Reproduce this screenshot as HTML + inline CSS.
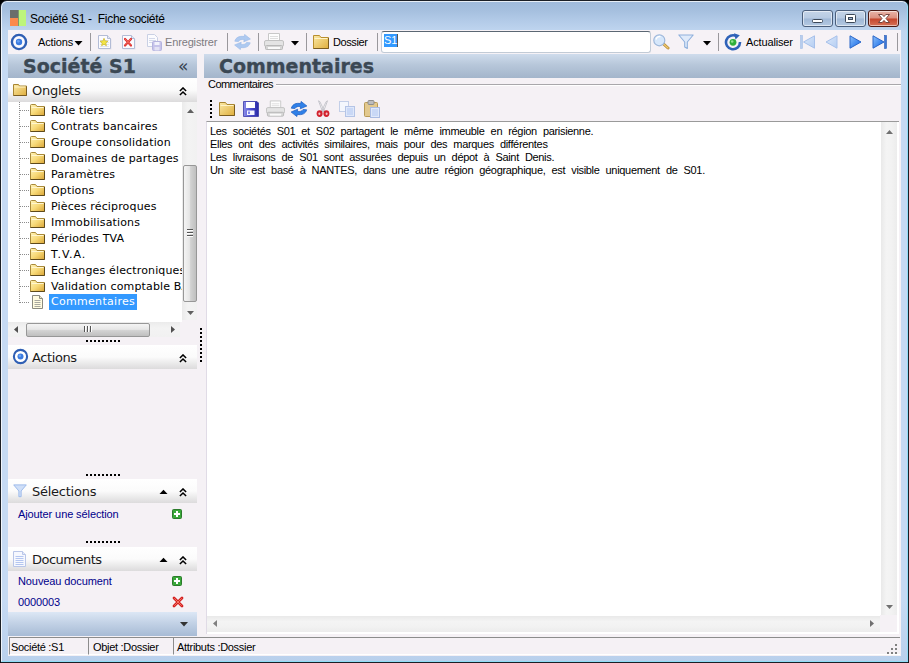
<!DOCTYPE html>
<html lang="fr">
<head>
<meta charset="utf-8">
<title>Société S1 - Fiche société</title>
<style>
html,body{margin:0;padding:0;}
body{width:909px;height:663px;overflow:hidden;background:#000;position:relative;font-family:"Liberation Sans",sans-serif;font-size:12px;color:#000;}
.abs{position:absolute;}
#win{position:absolute;left:0;top:0;width:907px;height:661px;border:1px solid #1b1f26;border-radius:7px 7px 1px 1px;background:linear-gradient(#9fbadb 0px,#a6c0df 10px,#b3cbe8 20px,#bfd5ef 30px,#c6daf3 60px,#c6daf3 600px,#b9d0ec 100%);overflow:hidden;}
#win:before{content:"";position:absolute;left:0;top:0;right:0;bottom:0;border:1px solid rgba(255,255,255,.75);border-right-color:#8fdcf6;border-bottom-color:#8fdcf6;border-radius:6px 6px 0 0;}
#client{position:absolute;left:7px;top:29px;width:893px;height:626px;background:#f5f1f5;}
.vd{font-family:"DejaVu Sans","Liberation Sans",sans-serif;}
#title{left:29px;top:11px;font-size:12px;letter-spacing:-.3px;white-space:pre;color:#000;}
.wb{position:absolute;top:9px;height:15px;border:1px solid #4b5f7c;border-radius:3px;box-shadow:inset 0 0 0 1px rgba(255,255,255,.55);background:linear-gradient(#c4d4e8 0,#b7cae2 48%,#9fb7d6 52%,#b4c9e2 100%);}
.wb.close{border-color:#4a1a14;background:linear-gradient(#e8b4a8 0,#dc8f7e 48%,#c4452c 52%,#d67258 100%);}
.tb{position:absolute;top:0;height:24px;}
.sep{position:absolute;top:3px;width:1px;height:18px;background:#9a989c;}
.tt{font-size:11px;letter-spacing:-.15px;white-space:pre;line-height:14px;}
.hdr{position:absolute;z-index:2;top:24px;height:24px;background:linear-gradient(#cfdcec 0,#b7c7da 45%,#a3b5cb 100%);}
.hdr span{position:absolute;font-family:"DejaVu Sans","Liberation Sans",sans-serif;font-weight:bold;color:#3b4854;white-space:pre;-webkit-text-stroke:.35px #3b4854;}
.sec{position:absolute;left:0;width:189px;height:24px;background:linear-gradient(#ffffff 0,#fbfbfb 50%,#dcdbdc 100%);}
.sec .lbl{position:absolute;left:24px;top:5px;letter-spacing:-.25px;line-height:15px;font-family:"DejaVu Sans","Liberation Sans",sans-serif;font-size:13px;color:#1a1a1a;}
.tree{position:absolute;left:0;top:72px;width:174px;height:220px;background:#fff;overflow:hidden;}
.ti{position:absolute;left:43px;font-family:"DejaVu Sans","Liberation Sans",sans-serif;font-size:11px;letter-spacing:.15px;white-space:pre;color:#000;height:14px;line-height:14px;margin-top:1px;}
.lnk{position:absolute;left:10px;font-size:11px;letter-spacing:-.1px;line-height:14px;color:#00008b;white-space:pre;}
.st{position:absolute;top:2px;height:16px;font-size:12px;line-height:16px;white-space:pre;}

.grip{width:34px;height:2px;background:repeating-linear-gradient(90deg,#000 0,#000 2px,transparent 2px,transparent 4px);}
.vdot{position:absolute;width:1px;background:repeating-linear-gradient(180deg,#8c8c8c 0,#8c8c8c 1px,transparent 1px,transparent 2px);}
.hdot{position:absolute;height:1px;background:repeating-linear-gradient(90deg,#8c8c8c 0,#8c8c8c 1px,transparent 1px,transparent 2px);}
.vdotk{position:absolute;width:2px;background:repeating-linear-gradient(180deg,#000 0,#000 2px,transparent 2px,transparent 4px);}
.thumbv{border:1px solid #979797;border-radius:2px;background:linear-gradient(90deg,#f4f4f4,#e6e6e6 45%,#d2d2d2 55%,#bfbfbf);}
.thumbh{border:1px solid #979797;border-radius:2px;background:linear-gradient(#f4f4f4,#e6e6e6 45%,#d2d2d2 55%,#bfbfbf);}
.cell{height:18px;border-top:1px solid #8c8c8c;border-left:1px solid #8c8c8c;border-bottom:1px solid #fff;box-sizing:border-box;}
.cell span{position:absolute;left:1px;top:2px;font-size:11px;line-height:14px;white-space:pre;letter-spacing:-.3px;word-spacing:0px;}
.ln{position:absolute;left:202px;font-size:11px;line-height:13px;height:13px;white-space:pre;letter-spacing:-.32px;word-spacing:3.3px;color:#000;}
</style>
</head>
<body>
<div id="win">
  <!-- app icon -->
  <div class="abs" style="left:9px;top:9px;width:8px;height:8px;background:#6b6e6b"></div>
  <div class="abs" style="left:9px;top:17px;width:8px;height:8px;background:#fb8a4c"></div>
  <div class="abs" style="left:17px;top:9px;width:8px;height:16px;background:#bdf57c"></div>
  <div class="abs" style="left:17px;top:9px;width:1px;height:16px;background:#7f9a6a"></div>
  <div id="title" class="abs">Société S1 -  Fiche société</div>
  <!-- window buttons -->
  <div class="wb" style="left:801px;width:29px;"><svg width="28" height="15" style="position:absolute;left:0;top:0"><rect x="9.5" y="8.5" width="10" height="3" rx="1" fill="#fff" stroke="#3c4858"/></svg></div>
  <div class="wb" style="left:834px;width:29px;"><svg width="29" height="15" style="position:absolute;left:0;top:0"><rect x="9.500" y="3.500" width="10" height="8" rx="1" fill="#fff" stroke="#3c4858"/><rect x="12.500" y="6.500" width="4" height="2" fill="#9db3d1" stroke="#3c4858"/></svg></div>
  <div class="wb close" style="left:867px;width:29px;"><svg width="29" height="15" style="position:absolute;left:0;top:0"><path d="M9.500 3.500 L13.200 3.500 L15 5.600 L16.800 3.500 L20.500 3.500 L17 7.500 L20.500 11.500 L16.800 11.500 L15 9.400 L13.200 11.500 L9.500 11.500 L13 7.500 Z" fill="#fff" stroke="#6a3a34" stroke-width=".9" stroke-linejoin="round"/></svg></div>

  <div id="client">
    <!-- TOOLBAR -->
    <div class="tb" style="left:0;width:893px;background:#f6f2f6;">

      <!-- circle icon -->
      <svg class="abs" style="left:2px;top:3px" width="18" height="18" viewBox="0 0 18 18"><circle cx="9" cy="9" r="7.100" fill="#fbfaff" stroke="#2f5fb4" stroke-width="2.400"/><circle cx="9" cy="9" r="3.200" fill="#3b7be0"/><circle cx="8.300" cy="8.300" r="1.400" fill="#6aa2f2"/></svg>
      <span class="abs tt" style="left:30px;top:5px;">Actions</span>
      <svg class="abs" style="left:66px;top:10px" width="9" height="6"><path d="M0.500 1 L8.500 1 L4.500 5.500 Z" fill="#000"/></svg>
      <div class="sep" style="left:82px"></div>
      <!-- new -->
      <svg class="abs" style="left:89px;top:4px" width="16" height="16" viewBox="0 0 16 16"><path d="M2.500 2.500 H11.500 L14.500 5.500 V15.500 H2.500 Z" fill="#d8d8e2" opacity=".6"/><path d="M1.500 1.500 H10.500 L13.500 4.500 V14.500 H1.500 Z" fill="#fbfbfe" stroke="#b3bcd6"/><path d="M10.500 1.500 V4.500 H13.500" fill="#e6eaf5" stroke="#b3bcd6"/><path d="M3 6.500H12M3 8.500H12M3 10.500H12M3 12.500H12" stroke="#dfe3f0"/><path d="M7 4.300 L8.100 6.900 L10.900 7.200 L8.800 9 L9.400 11.700 L7 10.300 L4.600 11.700 L5.200 9 L3.100 7.200 L5.900 6.900 Z" fill="#f3e546" stroke="#c9b52a" stroke-width=".7"/></svg>
      <!-- delete -->
      <svg class="abs" style="left:113px;top:4px" width="16" height="16" viewBox="0 0 16 16"><path d="M2.500 2.500 H11.500 L14.500 5.500 V15.500 H2.500 Z" fill="#d8d8e2" opacity=".6"/><path d="M1.500 1.500 H10.500 L13.500 4.500 V14.500 H1.500 Z" fill="#fbfbfe" stroke="#b3bcd6"/><path d="M10.500 1.500 V4.500 H13.500" fill="#e6eaf5" stroke="#b3bcd6"/><path d="M4 5 L10 11.500 M10 5 L4 11.500" stroke="#dc2a2a" stroke-width="2.200" stroke-linecap="round"/><path d="M4.300 5.300 L9.700 11.200 M9.700 5.300 L4.300 11.200" stroke="#f47a6a" stroke-width=".8" stroke-linecap="round"/></svg>
      <!-- save disabled -->
      <svg class="abs" style="left:138px;top:4px" width="17" height="17" viewBox="0 0 17 17"><path d="M1.500 .5 H8.500 L11.500 3.500 V12.500 H1.500 Z" fill="#fbfbfe" stroke="#c9d0e4"/><path d="M3 4.500H9M3 6.500H10M3 8.500H10" stroke="#d3d9ea"/><rect x="6.500" y="7.500" width="9" height="9" rx="1" fill="#c6c3ea" stroke="#b4b3de"/><rect x="8.500" y="8" width="5" height="3" fill="#f2f2fb"/><rect x="8.500" y="13" width="5" height="3.500" fill="#e3e2f4"/></svg>
      <span class="abs tt" style="left:157px;top:5px;color:#7d7b7f;">Enregistrer</span>
      <div class="sep" style="left:219px"></div>
      <!-- refresh disabled -->
      <svg class="abs" style="left:226px;top:4px" width="17" height="16" viewBox="0 0 17 16"><g fill="#adc9f0" stroke="#98b8e8" stroke-width=".6" stroke-linejoin="round"><path id="rfa" d="M.8 7.200 C1.800 3.400 5.500 1.600 10.200 2.600 L10.600 .4 L16.400 5 L9.800 7.800 L10.100 5.700 C7.500 5.100 5.500 5.700 4.400 7.600 Z"/><path d="M.8 7.200 C1.800 3.400 5.500 1.600 10.200 2.600 L10.600 .4 L16.400 5 L9.800 7.800 L10.100 5.700 C7.500 5.100 5.500 5.700 4.400 7.600 Z" transform="rotate(180 8.500 8)"/></g></svg>
      <div class="sep" style="left:250px"></div>
      <!-- printer -->
      <svg class="abs" style="left:256px;top:3px" width="20" height="18" viewBox="0 0 20 18"><path d="M4.500 .5 H15.500 V8 H4.500 Z" fill="#fdfdfd" stroke="#c8c8c8"/><path d="M6 3.500H14M6 5.500H14" stroke="#dedede"/><rect x=".5" y="7.500" width="19" height="6" rx="1.500" fill="#e4e4e4" stroke="#c2c2c2"/><rect x="1.500" y="12.500" width="17" height="4" rx="1" fill="#d6d6d6" stroke="#b8b8b8"/><rect x="4" y="14" width="12" height="2" fill="#fafafa"/></svg>
      <svg class="abs" style="left:283px;top:11px" width="8" height="5"><path d="M0 0 L8 0 L4 4.500 Z" fill="#000"/></svg>
      <div class="sep" style="left:298px"></div>
      <!-- folder -->
      <svg class="abs" style="left:305px;top:4px" width="17" height="16" viewBox="0 0 17 16"><defs><linearGradient id="fg" x1="0" y1="0" x2="1" y2="1"><stop offset="0" stop-color="#fbe9a6"/><stop offset="1" stop-color="#dfae3c"/></linearGradient></defs><path d="M.5 1.500 H6.500 L8 3.500 H15.500 V14.500 H.5 Z" fill="url(#fg)" stroke="#b98f2e"/><path d="M1.500 4.500 H14.500" stroke="#fff4c8" stroke-width="1"/><path d="M.5 14.500 H15.500 V4" fill="none" stroke="#7a5c20"/></svg>
      <span class="abs tt" style="left:325px;top:5px;letter-spacing:-.4px">Dossier</span>
      <div class="sep" style="left:369px"></div>
      <!-- input -->
      <div class="abs" style="left:373px;top:1px;width:268px;height:20px;background:#fff;border:1px solid #c2cbd6;border-top-color:#5b6773;border-radius:3px;box-sizing:content-box"></div>
      <div class="abs" style="left:376px;top:4px;width:13px;height:13px;background:#3399ff;"></div>
      <div class="abs" style="left:389px;top:4px;width:1px;height:13px;background:#555;"></div>
      <span class="abs" style="left:376px;top:4px;font-size:11px;color:#fff;line-height:13px;">S1</span>
      <!-- magnifier -->
      <svg class="abs" style="left:645px;top:4px" width="17" height="16" viewBox="0 0 17 16"><path d="M10 9.500 L15 14" stroke="#b98a34" stroke-width="3" stroke-linecap="round"/><path d="M10 9.500 L15 14" stroke="#ecc970" stroke-width="1.300" stroke-linecap="round"/><circle cx="6.300" cy="6.300" r="5.500" fill="#d6e7fb" stroke="#9db7da" stroke-width="1.200"/><path d="M3 5.500 A3.800 3.800 0 0 1 7.500 2.600" stroke="#fff" stroke-width="1.400" fill="none"/></svg>
      <!-- funnel -->
      <svg class="abs" style="left:670px;top:4px" width="16" height="16" viewBox="0 0 16 16"><path d="M.8 1 H15.200 L9.300 8 V14.500 L6.700 13 V8 Z" fill="#dfeafa" stroke="#8fb0dc" stroke-width="1.100" stroke-linejoin="round"/></svg>
      <svg class="abs" style="left:695px;top:11px" width="8" height="5"><path d="M0 0 L8 0 L4 4.500 Z" fill="#000"/></svg>
      <div class="sep" style="left:710px"></div>
      <!-- actualiser -->
      <svg class="abs" style="left:716px;top:3px" width="18" height="18" viewBox="0 0 18 18"><path d="M12.500 3.200 A7 7 0 1 0 16 9" fill="none" stroke="#2f62b8" stroke-width="2.600"/><path d="M10 .3 L15.800 2.200 L11.600 6.500 Z" fill="#2f62b8"/><circle cx="9" cy="9.300" r="3.400" fill="#2fae3a"/><circle cx="8.200" cy="8.500" r="1.300" fill="#8fe28f"/></svg>
      <span class="abs tt" style="left:738px;top:5px;">Actualiser</span>
      <!-- nav -->
      <svg class="abs" style="left:792px;top:5px" width="16" height="14" viewBox="0 0 16 14"><rect x=".5" y=".5" width="2" height="13" fill="#b7cdee" stroke="#a4bde4" stroke-width=".6"/><path d="M14.500 .8 V13.200 L3.500 7 Z" fill="url(#nvd)" stroke="#a6c0ea"/></svg>
      <svg class="abs" style="left:817px;top:5px" width="13" height="14" viewBox="0 0 13 14"><path d="M12 .8 V13.200 L1 7 Z" fill="url(#nvd)" stroke="#a6c0ea"/></svg>
      <svg class="abs" style="left:841px;top:5px" width="13" height="14" viewBox="0 0 13 14"><path d="M1 .8 V13.200 L12 7 Z" fill="url(#nvg)" stroke="#2a66c8"/></svg>
      <svg class="abs" style="left:864px;top:5px" width="16" height="14" viewBox="0 0 16 14"><path d="M1 .8 V13.200 L12 7 Z" fill="url(#nvg)" stroke="#2a66c8"/><rect x="12.500" y=".5" width="2" height="13" fill="#3a78d8" stroke="#2a5cb4" stroke-width=".6"/></svg>
      <div class="sep" style="left:889px"></div>
    </div>
    <!-- HEADERS -->
    <div class="hdr" style="left:0;width:189px;"><span style="left:15px;top:1px;font-size:19px;">Société S1</span></div>
    <div class="hdr" style="left:196px;width:696px;"><span style="left:15px;top:1px;font-size:19px;">Commentaires</span></div>

    <svg width="0" height="0" style="position:absolute"><defs><linearGradient id="nvg" x1="0" y1="0" x2="1" y2="1"><stop offset="0" stop-color="#8cc0fa"/><stop offset=".6" stop-color="#3f88ee"/><stop offset="1" stop-color="#2a6ad8"/></linearGradient><linearGradient id="nvd" x1="0" y1="0" x2="1" y2="1"><stop offset="0" stop-color="#dbe8fa"/><stop offset="1" stop-color="#b4cdf2"/></linearGradient><linearGradient id="fg2" x1="0" y1="0" x2="1" y2="1"><stop offset="0" stop-color="#fff3b8"/><stop offset=".5" stop-color="#f7d977"/><stop offset="1" stop-color="#d9a436"/></linearGradient></defs></svg>
    <span class="abs vd" style="left:170px;top:26px;z-index:3;font-size:17px;color:#36424e;line-height:20px;">«</span>
    <!-- Onglets -->
    <div class="sec" style="top:48px;"><svg class="abs" style="left:5px;top:5px" width="15" height="14" viewBox="0 0 15 14"><path d="M.5 1.500 H5.500 L6.500 3 H13.500 V12.500 H.5 Z" fill="url(#fg)" stroke="#a98632"/><path d="M1.500 4 H12.500" stroke="#fff4c8"/><path d="M.5 12.500 H13.500 V3.500" fill="none" stroke="#7a5c20"/></svg><span class="lbl">Onglets</span><svg class="abs" style="left:171px;top:9px" width="8" height="9" viewBox="0 0 9 10"><path d="M1 4.500 L4.500 1 L8 4.500 M1 9 L4.500 5.500 L8 9" fill="none" stroke="#000" stroke-width="1.700"/></svg></div>
    <div class="tree"><div class="abs vdot" style="left:11px;top:0;height:201px"></div><div class="abs hdot" style="left:12px;top:8px;width:10px"></div><svg class="abs" style="left:22px;top:2px" width="16" height="12" viewBox="0 0 16 12"><path d="M.5 1.500 Q.5 .5 1.500 .5 H5.500 L7 2.500 H14.500 V11.500 H.5 Z" fill="url(#fg2)" stroke="#a98a3a"/><path d="M1.500 3.500 H13.500" stroke="#fff6d0"/><path d="M.5 11.500 H14.500 V3" fill="none" stroke="#5e4a1c"/></svg><span class="ti" style="top:1px">Rôle tiers</span><div class="abs hdot" style="left:12px;top:24px;width:10px"></div><svg class="abs" style="left:22px;top:18px" width="16" height="12" viewBox="0 0 16 12"><path d="M.5 1.500 Q.5 .5 1.500 .5 H5.500 L7 2.500 H14.500 V11.500 H.5 Z" fill="url(#fg2)" stroke="#a98a3a"/><path d="M1.500 3.500 H13.500" stroke="#fff6d0"/><path d="M.5 11.500 H14.500 V3" fill="none" stroke="#5e4a1c"/></svg><span class="ti" style="top:17px">Contrats bancaires</span><div class="abs hdot" style="left:12px;top:40px;width:10px"></div><svg class="abs" style="left:22px;top:34px" width="16" height="12" viewBox="0 0 16 12"><path d="M.5 1.500 Q.5 .5 1.500 .5 H5.500 L7 2.500 H14.500 V11.500 H.5 Z" fill="url(#fg2)" stroke="#a98a3a"/><path d="M1.500 3.500 H13.500" stroke="#fff6d0"/><path d="M.5 11.500 H14.500 V3" fill="none" stroke="#5e4a1c"/></svg><span class="ti" style="top:33px">Groupe consolidation</span><div class="abs hdot" style="left:12px;top:56px;width:10px"></div><svg class="abs" style="left:22px;top:50px" width="16" height="12" viewBox="0 0 16 12"><path d="M.5 1.500 Q.5 .5 1.500 .5 H5.500 L7 2.500 H14.500 V11.500 H.5 Z" fill="url(#fg2)" stroke="#a98a3a"/><path d="M1.500 3.500 H13.500" stroke="#fff6d0"/><path d="M.5 11.500 H14.500 V3" fill="none" stroke="#5e4a1c"/></svg><span class="ti" style="top:49px">Domaines de partages</span><div class="abs hdot" style="left:12px;top:72px;width:10px"></div><svg class="abs" style="left:22px;top:66px" width="16" height="12" viewBox="0 0 16 12"><path d="M.5 1.500 Q.5 .5 1.500 .5 H5.500 L7 2.500 H14.500 V11.500 H.5 Z" fill="url(#fg2)" stroke="#a98a3a"/><path d="M1.500 3.500 H13.500" stroke="#fff6d0"/><path d="M.5 11.500 H14.500 V3" fill="none" stroke="#5e4a1c"/></svg><span class="ti" style="top:65px">Paramètres</span><div class="abs hdot" style="left:12px;top:88px;width:10px"></div><svg class="abs" style="left:22px;top:82px" width="16" height="12" viewBox="0 0 16 12"><path d="M.5 1.500 Q.5 .5 1.500 .5 H5.500 L7 2.500 H14.500 V11.500 H.5 Z" fill="url(#fg2)" stroke="#a98a3a"/><path d="M1.500 3.500 H13.500" stroke="#fff6d0"/><path d="M.5 11.500 H14.500 V3" fill="none" stroke="#5e4a1c"/></svg><span class="ti" style="top:81px">Options</span><div class="abs hdot" style="left:12px;top:104px;width:10px"></div><svg class="abs" style="left:22px;top:98px" width="16" height="12" viewBox="0 0 16 12"><path d="M.5 1.500 Q.5 .5 1.500 .5 H5.500 L7 2.500 H14.500 V11.500 H.5 Z" fill="url(#fg2)" stroke="#a98a3a"/><path d="M1.500 3.500 H13.500" stroke="#fff6d0"/><path d="M.5 11.500 H14.500 V3" fill="none" stroke="#5e4a1c"/></svg><span class="ti" style="top:97px">Pièces réciproques</span><div class="abs hdot" style="left:12px;top:120px;width:10px"></div><svg class="abs" style="left:22px;top:114px" width="16" height="12" viewBox="0 0 16 12"><path d="M.5 1.500 Q.5 .5 1.500 .5 H5.500 L7 2.500 H14.500 V11.500 H.5 Z" fill="url(#fg2)" stroke="#a98a3a"/><path d="M1.500 3.500 H13.500" stroke="#fff6d0"/><path d="M.5 11.500 H14.500 V3" fill="none" stroke="#5e4a1c"/></svg><span class="ti" style="top:113px">Immobilisations</span><div class="abs hdot" style="left:12px;top:136px;width:10px"></div><svg class="abs" style="left:22px;top:130px" width="16" height="12" viewBox="0 0 16 12"><path d="M.5 1.500 Q.5 .5 1.500 .5 H5.500 L7 2.500 H14.500 V11.500 H.5 Z" fill="url(#fg2)" stroke="#a98a3a"/><path d="M1.500 3.500 H13.500" stroke="#fff6d0"/><path d="M.5 11.500 H14.500 V3" fill="none" stroke="#5e4a1c"/></svg><span class="ti" style="top:129px">Périodes TVA</span><div class="abs hdot" style="left:12px;top:152px;width:10px"></div><svg class="abs" style="left:22px;top:146px" width="16" height="12" viewBox="0 0 16 12"><path d="M.5 1.500 Q.5 .5 1.500 .5 H5.500 L7 2.500 H14.500 V11.500 H.5 Z" fill="url(#fg2)" stroke="#a98a3a"/><path d="M1.500 3.500 H13.500" stroke="#fff6d0"/><path d="M.5 11.500 H14.500 V3" fill="none" stroke="#5e4a1c"/></svg><span class="ti" style="top:145px;letter-spacing:1px">T.V.A.</span><div class="abs hdot" style="left:12px;top:168px;width:10px"></div><svg class="abs" style="left:22px;top:162px" width="16" height="12" viewBox="0 0 16 12"><path d="M.5 1.500 Q.5 .5 1.500 .5 H5.500 L7 2.500 H14.500 V11.500 H.5 Z" fill="url(#fg2)" stroke="#a98a3a"/><path d="M1.500 3.500 H13.500" stroke="#fff6d0"/><path d="M.5 11.500 H14.500 V3" fill="none" stroke="#5e4a1c"/></svg><span class="ti" style="top:161px">Echanges électroniques</span><div class="abs hdot" style="left:12px;top:184px;width:10px"></div><svg class="abs" style="left:22px;top:178px" width="16" height="12" viewBox="0 0 16 12"><path d="M.5 1.500 Q.5 .5 1.500 .5 H5.500 L7 2.500 H14.500 V11.500 H.5 Z" fill="url(#fg2)" stroke="#a98a3a"/><path d="M1.500 3.500 H13.500" stroke="#fff6d0"/><path d="M.5 11.500 H14.500 V3" fill="none" stroke="#5e4a1c"/></svg><span class="ti" style="top:177px">Validation comptable BAP</span><div class="abs hdot" style="left:12px;top:200px;width:10px"></div><svg class="abs" style="left:24px;top:193px" width="12" height="14" viewBox="0 0 12 14"><path d="M.5 .5 H7.500 L10.500 3.500 V13.500 H.5 Z" fill="#fffbe0" stroke="#8a8a80"/><path d="M7.500 .5 V3.500 H10.500" fill="#f0ecc8" stroke="#8a8a80"/><path d="M2.500 5.500H8.500M2.500 7.500H8.500M2.500 9.500H8.500M2.500 11.500H8.500" stroke="#a8a8a0"/></svg><span class="ti" style="top:192px;left:41px;margin-top:0;padding:0 0 0 2px;width:86px;background:#3399ff;color:#fff;height:16px;line-height:16px;letter-spacing:.3px">Commentaires</span></div>
    <!-- tree v scrollbar -->
    <div class="abs" style="left:174px;top:72px;width:15px;height:218px;background:linear-gradient(90deg,#ebebeb,#f3f3f3 40%,#f1f1f1);"></div>
    <svg class="abs" style="left:179px;top:79px" width="7" height="4"><path d="M0 4 L3.500 0 L7 4 Z" fill="#606060"/></svg>
    <svg class="abs" style="left:179px;top:281px" width="7" height="4"><path d="M0 0 L3.500 4 L7 0 Z" fill="#606060"/></svg>
    <div class="abs thumbv" style="left:175px;top:135px;width:12px;height:135px;"></div>
    <div class="abs" style="left:179px;top:199px;width:6px;height:1px;background:#555;box-shadow:0 3px 0 #555,0 6px 0 #555,0 1px 0 #fff,0 4px 0 #fff,0 7px 0 #fff;"></div>
    <!-- tree h scrollbar -->
    <div class="abs" style="left:0;top:292px;width:172px;height:15px;background:linear-gradient(#ebebeb,#f3f3f3 40%,#f1f1f1);"></div>
    <svg class="abs" style="left:6px;top:296px" width="4" height="7"><path d="M4 0 L0 3.500 L4 7 Z" fill="#505050"/></svg>
    <svg class="abs" style="left:163px;top:296px" width="4" height="7"><path d="M0 0 L4 3.500 L0 7 Z" fill="#505050"/></svg>
    <div class="abs thumbh" style="left:18px;top:293px;width:122px;height:12px;"></div>
    <div class="abs" style="left:76px;top:296px;width:1px;height:6px;background:#555;box-shadow:3px 0 0 #555,6px 0 0 #555,1px 0 0 #fff,4px 0 0 #fff,7px 0 0 #fff;"></div>
    <div class="abs grip" style="left:78px;top:310px"></div>
    <div class="abs vdotk" style="left:192px;top:298px;height:34px;"></div>
    <!-- Actions -->
    <div class="sec" style="top:315px;"><svg class="abs" style="left:4px;top:3px" width="17" height="17" viewBox="0 0 18 18"><circle cx="9" cy="9" r="7" fill="#fff" stroke="#2f5fb4" stroke-width="2.200"/><circle cx="9" cy="9" r="3.200" fill="#3b7be0"/><circle cx="8.300" cy="8.300" r="1.400" fill="#6aa2f2"/></svg><span class="lbl" style="letter-spacing:-.4px">Actions</span><svg class="abs" style="left:171px;top:9px" width="8" height="9" viewBox="0 0 9 10"><path d="M1 4.500 L4.500 1 L8 4.500 M1 9 L4.500 5.500 L8 9" fill="none" stroke="#000" stroke-width="1.700"/></svg></div>
    <div class="abs grip" style="left:78px;top:444px"></div>
    <!-- Selections -->
    <div class="sec" style="top:449px;"><svg class="abs" style="left:5px;top:5px" width="14" height="14" viewBox="0 0 16 16"><path d="M.8 1 H15.200 L9.300 8 V14.500 L6.700 14.500 V8 Z" fill="#cfdff8" stroke="#9bb9ea" stroke-width="1.100" stroke-linejoin="round"/></svg><span class="lbl">Sélections</span><svg class="abs" style="left:151px;top:10px" width="9" height="5" viewBox="0 0 9 5"><path d="M0.500 5 L4.500 .8 L8.500 5 Z" fill="#000"/></svg><svg class="abs" style="left:171px;top:9px" width="8" height="9" viewBox="0 0 9 10"><path d="M1 4.500 L4.500 1 L8 4.500 M1 9 L4.500 5.500 L8 9" fill="none" stroke="#000" stroke-width="1.700"/></svg></div>
    <span class="lnk" style="top:477px">Ajouter une sélection</span>
    <svg class="abs" style="left:164px;top:479px" width="10" height="10" viewBox="0 0 10 10"><rect x=".5" y=".5" width="9" height="9" rx="1" fill="#3aa83a" stroke="#2c7a2c"/><path d="M5 2 V8 M2 5 H8" stroke="#fff" stroke-width="2"/></svg>
    <div class="abs grip" style="left:78px;top:511px"></div>
    <!-- Documents -->
    <div class="sec" style="top:517px;"><svg class="abs" style="left:5px;top:4px" width="14" height="16" viewBox="0 0 14 16"><path d="M.5 .5 H9.500 L12.500 3.500 V15.500 H.5 Z" fill="#f6f8fe" stroke="#b9c6e8"/><path d="M9.500 .5 V3.500 H12.500" fill="#e4eaf9" stroke="#b9c6e8"/><path d="M2.500 5.500H10.500M2.500 7.500H10.500M2.500 9.500H10.500M2.500 11.500H10.500M2.500 13.500H10.500" stroke="#b4c6f0"/></svg><span class="lbl" style="letter-spacing:-.5px">Documents</span><svg class="abs" style="left:151px;top:10px" width="9" height="5" viewBox="0 0 9 5"><path d="M0.500 5 L4.500 .8 L8.500 5 Z" fill="#000"/></svg><svg class="abs" style="left:171px;top:9px" width="8" height="9" viewBox="0 0 9 10"><path d="M1 4.500 L4.500 1 L8 4.500 M1 9 L4.500 5.500 L8 9" fill="none" stroke="#000" stroke-width="1.700"/></svg></div>
    <span class="lnk" style="top:544px">Nouveau document</span>
    <svg class="abs" style="left:164px;top:546px" width="10" height="10" viewBox="0 0 10 10"><rect x=".5" y=".5" width="9" height="9" rx="1" fill="#3aa83a" stroke="#2c7a2c"/><path d="M5 2 V8 M2 5 H8" stroke="#fff" stroke-width="2"/></svg>
    <span class="lnk" style="top:565px">0000003</span>
    <svg class="abs" style="left:164px;top:566px" width="12" height="12" viewBox="0 0 12 12"><path d="M2 2 L10 10 M10 2 L2 10" stroke="#d42020" stroke-width="2.800" stroke-linecap="round"/><path d="M2.500 2.500 L9.500 9.500 M9.500 2.500 L2.500 9.500" stroke="#f47a6a" stroke-width=".9" stroke-linecap="round"/></svg>
    <div class="abs" style="left:0;top:582px;width:189px;height:24px;background:linear-gradient(#dce7f5 0,#c3d2e6 45%,#a7bbd5 100%);"></div>
    <svg class="abs" style="left:172px;top:592px" width="8" height="5"><path d="M0 0 L8 0 L4 4.500 Z" fill="#333"/></svg>
    <!-- status bar -->
    <div class="abs" style="left:0;top:606px;width:893px;height:20px;background:#f5f1f5;"></div>
    <div class="abs" style="left:196px;top:607px;width:696px;height:1px;background:#8c8c8c;"></div>
    <div class="abs cell" style="left:1px;top:607px;width:79px;"><span>Société :S1</span></div>
    <div class="abs cell" style="left:80px;top:607px;width:85px;"><span style="left:4px">Objet :Dossier</span></div>
    <div class="abs cell" style="left:165px;top:607px;width:727px;"><span style="left:3px">Attributs :Dossier</span></div>
    <div class="abs" style="left:887px;top:614px;width:2px;height:2px;background:#808080;box-shadow:0 4px 0 #808080,0 8px 0 #808080,-4px 4px 0 #808080,-4px 8px 0 #808080,-8px 8px 0 #808080;"></div>

    <!-- group label -->
    <div class="abs" style="left:268px;top:54px;width:625px;height:1px;background:#a9a7ab;box-shadow:0 1px 0 #fff;"></div>
    <span class="abs" style="left:198px;top:47px;padding:0 3px 0 2px;background:#f5f1f5;font-size:11px;line-height:14px;white-space:pre;letter-spacing:-.55px;">Commentaires</span>
    <div class="abs vdotk" style="left:202px;top:70px;height:18px;"></div>
    <!-- inner toolbar icons -->
    <svg class="abs" style="left:211px;top:71px" width="17" height="16" viewBox="0 0 17 16"><path d="M.5 1.500 H6.500 L8 3.500 H15.500 V14.500 H.5 Z" fill="url(#fg)" stroke="#a98632"/><path d="M1.500 4.500 H14.500" stroke="#fff4c8"/><path d="M.5 14.500 H15.500 V4" fill="none" stroke="#7a5c20"/></svg>
    <svg class="abs" style="left:235px;top:71px" width="16" height="16" viewBox="0 0 16 16"><defs><linearGradient id="flg" x1="0" y1="0" x2="1" y2="0"><stop offset="0" stop-color="#8d8fe8"/><stop offset=".5" stop-color="#4a4cd0"/><stop offset="1" stop-color="#2a2aa4"/></linearGradient></defs><path d="M.5 .5 H14 L15.500 2 V15.500 H.5 Z" fill="url(#flg)" stroke="#3a3aa8" stroke-width=".8"/><rect x="3" y="1" width="9" height="6" fill="#fff"/><rect x="4" y="9.500" width="7.500" height="4.500" fill="#f4f5ff"/><rect x="5" y="10.500" width="2" height="2.500" fill="#7f86e8"/></svg>
    <svg class="abs" style="left:258px;top:70px" width="19" height="18" viewBox="0 0 20 18"><path d="M4.500 .5 H15.500 V8 H4.500 Z" fill="#fdfdfd" stroke="#c8c8c8"/><path d="M6 3.500H14M6 5.500H14" stroke="#dedede"/><rect x=".5" y="7.500" width="19" height="6" rx="1.500" fill="#e4e4e4" stroke="#c2c2c2"/><rect x="1.500" y="12.500" width="17" height="4" rx="1" fill="#d6d6d6" stroke="#b8b8b8"/><rect x="4" y="14" width="12" height="2" fill="#fafafa"/></svg>
    <svg class="abs" style="left:282px;top:71px" width="18" height="16" viewBox="0 0 17 16"><g fill="#2f80e8" stroke="#1d5cc0" stroke-width=".7" stroke-linejoin="round"><path d="M.8 7.200 C1.800 3.400 5.500 1.600 10.200 2.600 L10.600 .4 L16.400 5 L9.800 7.800 L10.100 5.700 C7.500 5.100 5.500 5.700 4.400 7.600 Z"/><path d="M.8 7.200 C1.800 3.400 5.500 1.600 10.200 2.600 L10.600 .4 L16.400 5 L9.800 7.800 L10.100 5.700 C7.500 5.100 5.500 5.700 4.400 7.600 Z" transform="rotate(180 8.500 8)"/></g></svg>
    <svg class="abs" style="left:308px;top:70px" width="14" height="18" viewBox="0 0 14 18"><path d="M2.500 .8 Q4 1 5 4 L8.300 11 L6.500 11.500 Z M11.500 .8 Q10 1 9 4 L5.700 11 L7.500 11.500 Z" fill="#fbfbfd" stroke="#b9b9c0" stroke-width=".8"/><ellipse cx="3.600" cy="13.600" rx="3" ry="3.400" fill="#d2222e"/><ellipse cx="10.400" cy="13.600" rx="3" ry="3.400" fill="#d2222e"/><ellipse cx="3.400" cy="13.800" rx="1" ry="1.300" fill="#f6c4c4"/><ellipse cx="10.600" cy="13.800" rx="1" ry="1.300" fill="#f6c4c4"/></svg>
    <svg class="abs" style="left:331px;top:71px" width="17" height="16" viewBox="0 0 17 16"><rect x=".5" y=".5" width="9" height="10" fill="#f4f7fd" stroke="#c3cfe8"/><rect x="6.500" y="5.500" width="9" height="10" fill="#dfe8fa" stroke="#b4c4e6"/><rect x="8" y="7" width="6" height="7" fill="#c9d8f6"/></svg>
    <svg class="abs" style="left:356px;top:70px" width="16" height="18" viewBox="0 0 16 18"><rect x=".5" y="2.500" width="13" height="14" rx="1" fill="#e3c98e" stroke="#b89a56"/><rect x="4" y=".5" width="6" height="4" rx="1" fill="#bdbdbd" stroke="#8e8e8e"/><rect x="6.500" y="7.500" width="9" height="10" fill="#dfe8fa" stroke="#a9bbe2"/><rect x="8" y="9" width="6" height="7" fill="#c9d8f6"/></svg>
    <!-- text area -->
    <div class="abs" style="left:198px;top:91px;width:693px;height:513px;background:#fff;border-top:1px solid #9a9a9a;border-left:1px solid #e0dbe6;box-sizing:border-box;"></div>
    <div class="ln" style="top:95px">Les sociétés S01 et S02 partagent le même immeuble en région parisienne.</div><div class="ln" style="top:108px">Elles ont des activités similaires, mais pour des marques différentes</div><div class="ln" style="top:121px">Les livraisons de S01 sont assurées depuis un dépot à Saint Denis.</div><div class="ln" style="top:134px">Un site est basé à NANTES, dans une autre région géographique, est visible uniquement de S01.</div>
    <!-- v scrollbar -->
    <div class="abs" style="left:873px;top:92px;width:16px;height:493px;background:linear-gradient(90deg,#e9e9e9,#f4f4f4 35%,#f2f2f2 65%,#ececec);"></div>
    <svg class="abs" style="left:878px;top:100px" width="7" height="4"><path d="M0 4 L3.500 0 L7 4 Z" fill="#707070"/></svg>
    <svg class="abs" style="left:878px;top:575px" width="7" height="4"><path d="M0 0 L3.500 4 L7 0 Z" fill="#707070"/></svg>
    <!-- h scrollbar -->
    <div class="abs" style="left:199px;top:586px;width:673px;height:16px;background:linear-gradient(#e9e9e9,#f4f4f4 35%,#f2f2f2 65%,#ececec);"></div>
    <div class="abs" style="left:872px;top:585px;width:17px;height:17px;background:#f5f1f5;"></div>
    <svg class="abs" style="left:205px;top:590px" width="4" height="7"><path d="M4 0 L0 3.500 L4 7 Z" fill="#808080"/></svg>
    <svg class="abs" style="left:862px;top:590px" width="4" height="7"><path d="M0 0 L4 3.500 L0 7 Z" fill="#707070"/></svg>
  </div>
</div>
</body>
</html>
